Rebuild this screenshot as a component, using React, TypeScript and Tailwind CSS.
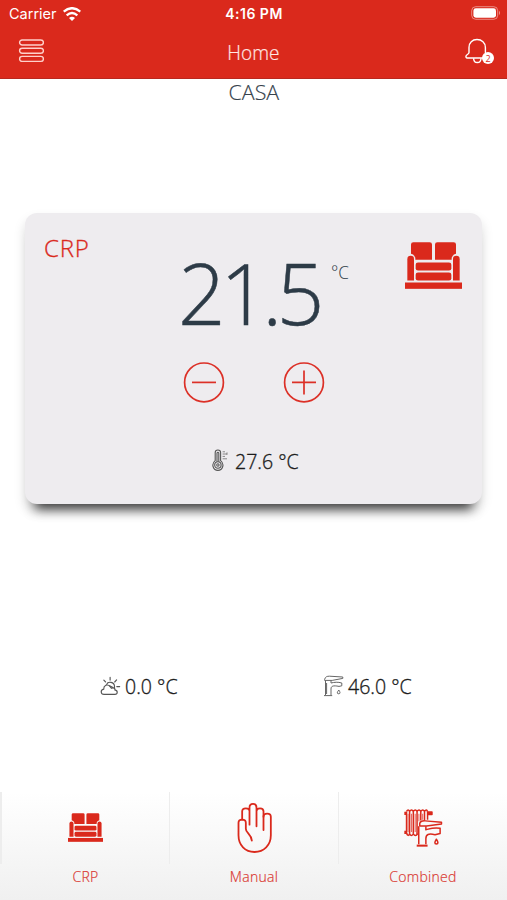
import type { ReactNode } from "react";
import { clsx } from "clsx";

interface IconProps {
  className?: string;
}

function WifiIcon({ className }: IconProps) {
  return (
    <svg viewBox="0 0 54 42" className={className} fill="none" stroke="currentColor" strokeWidth="7">
      <path d="M2 14 Q27 -7 52 14" />
      <path d="M11 25 Q27 11 43 25" />
      <path d="M27 42 L18 33 Q27 25 36 33 Z" fill="currentColor" stroke="none" />
    </svg>
  );
}

function BatteryIcon({ className }: IconProps) {
  return (
    <svg viewBox="0 0 30 14" className={className}>
      <rect x="0.7" y="0.7" width="26" height="12.6" rx="4" fill="none" stroke="#fff" strokeOpacity="0.45" />
      <rect x="2.4" y="2.3" width="22.6" height="9.4" rx="2.4" fill="#fff" />
      <path d="M28 4.8 Q30 7 28 9.2 Z" fill="#fff" fillOpacity="0.5" />
    </svg>
  );
}

function MenuIcon({ className }: IconProps) {
  return (
    <svg viewBox="0 0 26 24" className={className} fill="none" stroke="currentColor" strokeWidth="1.4">
      <rect x="1.6" y="1" width="23.8" height="5" rx="2.5" />
      <rect x="1.6" y="9.2" width="23.8" height="5" rx="2.5" />
      <rect x="1.6" y="17.4" width="23.8" height="5" rx="2.5" />
    </svg>
  );
}

function BellIcon({ className }: IconProps) {
  return (
    <svg viewBox="0 0 26 26" className={className} fill="none" stroke="currentColor" strokeWidth="1.4" strokeLinejoin="round">
      <path d="M4 14.4 V9.4 C4 4.6 7.3 1.5 12 1.5 S20.4 4.6 20.4 9.4 V14.4 M4 14.4 C4 16.3 .9 16.6 .9 18.4 Q.9 20 3 20 H18" strokeLinecap="round" />
      <path d="M8.6 20.2 C8.6 26 16 26 16 20.2" />
    </svg>
  );
}

function SofaIcon({ className }: IconProps) {
  return (
    <svg viewBox="0 0 171 140" className={className} fill="currentColor">
      <path d="M25 0 H74 Q81 0 81 7 V53 H31 V47 Q29 38 18 35 V7 Q18 0 25 0 Z" />
      <path d="M97 0 H146 Q153 0 153 7 V35 Q142 38 140 47 V53 H90 V7 Q90 0 97 0 Z" />
      <path d="M7 115 V51 Q7 41 17 41 Q27 41 27 51 V115 Z" />
      <path d="M144 115 V51 Q144 41 154 41 Q164 41 164 51 V115 Z" />
      <rect x="32" y="61" width="107" height="24" rx="7" />
      <rect x="32" y="91" width="107" height="24" rx="7" />
      <rect x="0" y="121" width="171" height="19" />
    </svg>
  );
}

function HandIcon({ className }: IconProps) {
  return (
    <svg viewBox="0 0 104 150" className={className} fill="none" stroke="currentColor" strokeWidth="5.4" strokeLinecap="round" strokeLinejoin="round">
      <path d="M44 113 C42 92 26 91 26 77 V59 C26 47 4 47 4 59 V97 C4 127 24 147 52 147 S101 127 101 97 V41 C101 29 79 29 79 41 V81" />
      <path d="M79 41 V25 C79 13 58 13 58 25 V70 M58 25 V14 C58 -1 37 -1 37 14 V65 M37 25 C37 13 15 13 15 25 V50" />
    </svg>
  );
}

function ThermometerIcon({ className }: IconProps) {
  return (
    <svg viewBox="0 0 16 22" className={className} fill="none" stroke="currentColor" strokeWidth="1.1">
      <path d="M3.2 11.6 V3.6 C3.2 .2 8.6 .2 8.6 3.6 V11.6 C13 15 10.6 21.4 5.9 21.4 S-1.2 15 3.2 11.6 Z" />
      <path d="M5 12.8 V4 Q5.9 2.5 6.8 4 V12.8" />
      <circle cx="5.9" cy="16" r="3.2" />
      <circle cx="5.9" cy="16" r="1.2" />
      <path d="M10.6 2.8 H13 M10.6 5 H15 M10.6 7.4 H13 M10.6 9.8 H15 M15 3.4 V5.8" strokeWidth="0.9" strokeOpacity="0.75" />
    </svg>
  );
}

function WeatherIcon({ className }: IconProps) {
  return (
    <svg viewBox="0 0 22 20" className={className} fill="none" stroke="currentColor" strokeWidth="1.2" strokeLinecap="round">
      <path d="M4.2 18.8 C.6 18.8 .1 14 3.9 13.3 C3.7 9.6 7.8 7.4 10.4 10.3 L12 12.3 C14.7 11.2 16 13 15.6 14 C19 14.6 18.7 18.8 15.6 18.8 Z" />
      <path d="M7 8.3 C8.2 4.9 15.2 5.4 15.2 10.6 V11.6 M10 9.8 L13.6 11.6" />
      <path d="M10.6 1 V3.8 M4 3.8 L5.8 5.8 M17.4 3.6 L15.4 5.8 M17.6 10.6 H20.6" />
    </svg>
  );
}

function FaucetIcon({ className }: IconProps) {
  return (
    <svg viewBox="0 0 21 22" className={className} fill="none" stroke="currentColor" strokeWidth="1" strokeLinejoin="round">
      <path d="M1.6 4.4 C2.4 1.6 4 1.2 6.5 1.2 L19.8 2 V3.4 L9.2 5.4 H1.6 Z" />
      <path d="M2.5 5.5 V20 M8 20 V14 C8 11 10 10.2 16 11.4 L18.8 10.8 V8 C14.8 6.8 11.5 7.2 8 8 V5.6" />
      <path d="M1 20.6 H9.2 M3.6 8 V19" />
      <path d="M15.8 15 Q12.8 18.8 15.8 18.8 Q18.2 18.6 15.8 15 Z" />
    </svg>
  );
}

// Radiator with a tap in front of it
function CombinedIcon({ className }: IconProps) {
  return (
    <svg viewBox="0 0 114 112" className={className} fill="none" stroke="currentColor" strokeWidth="4.4" strokeLinejoin="round">
      <path d="M7 7 Q12 -1 16 7 Q22 -1 27 7 Q33 -1 38 7 Q44 -1 49 7 Q55 -1 60 7 Q66 -1 69 8" />
      <path d="M7 7 V74 M16 7 V72 M27 7 V72 M38 7 V74 M49 7 V34 M60 7 V34 M69 8 V32" />
      <path d="M11.5 14 V68 M21.5 14 V68 M32.5 14 V68 M43.5 14 V36 M54.5 14 V32" strokeWidth="3" strokeOpacity="0.7" />
      <path d="M7 72 Q12 83 16 73 Q22 83 27 73 Q33 83 40 73" />
      <path d="M3 8 V18 M3 64 V74" strokeWidth="5" />
      <path d="M70 9 H82 V16 H70 Z" fill="currentColor" />
      <path d="M46 42 C49 34 54 35 62 35 L110 39 V44 L66 50 H46 Z" fill="#fafafa" />
      <path d="M43 51 V104 M64 104 V88 C64 75 72 71 91 76 L106 72 V57 C91 53 79 57 64 61 V51" />
      <path d="M37 108 H69" strokeWidth="6" />
      <path d="M95 89 Q86 103 95 103 Q104 103 95 89 Z" />
    </svg>
  );
}

function StatusBar() {
  return (
    <div className="grid h-7 grid-cols-3 items-center pl-[9px] pr-[6px]">
      <div className="flex items-center gap-[6px] font-['Inter',sans-serif] text-[14.5px]">
        Carrier
        <WifiIcon className="mb-px h-[14px] w-[18px]" />
      </div>
      <div className="-ml-[2px] mb-px text-center font-['Inter',sans-serif] text-[14px] font-semibold tracking-[0.5px]">
        4:16 PM
      </div>
      <BatteryIcon className="mb-[2px] h-[14px] w-[30px] justify-self-end" />
    </div>
  );
}

function NavBar() {
  return (
    <div className="grid h-[51px] grid-cols-3 items-start pt-[10px] pr-[13px] pl-[18px]">
      <MenuIcon className="mt-px h-6 w-[26px] text-[#ffd0ca]" />
      <h1 className="-ml-[5px] text-center text-[20px] leading-[30px] font-light text-[#ffe7e4] [-webkit-text-stroke:0.2px]">
        <span className="inline-block scale-x-[0.95]">Home</span>
      </h1>
      <div className="relative h-[26px] w-[29px] justify-self-end">
        <BellIcon className="h-[26px] w-[26px]" />
        <span className="absolute right-0 bottom-0 flex h-3 w-3 items-center justify-center rounded-full bg-white text-[9px] leading-none text-[#da291c]">
          2
        </span>
      </div>
    </div>
  );
}

function RoundButton({ label, plus }: { label: string; plus?: boolean }) {
  return (
    <button aria-label={label} className="h-[42px] w-[42px] text-[#dc3027]">
      <svg viewBox="0 0 42 42" className="h-full w-full" fill="none" stroke="currentColor" strokeWidth="1.7">
        <circle cx="21" cy="21.4" r="19.4" />
        <path d={plus ? "M9 21.4 H33 M21 9.4 V33.4" : "M9 21.4 H33"} />
      </svg>
    </button>
  );
}

function ThermostatCard() {
  return (
    <section className="mx-[25px] mt-[107px] flex h-[291px] flex-col rounded-[12px] bg-[#eeecef] shadow-[0_15px_12px_-10px_rgba(0,0,0,0.75),0_7px_12px_rgba(0,0,0,0.15)]">
      <div className="grid h-[122px] grid-cols-[130px_1fr_130px]">
        <h2 className="pt-[17px] pl-[19px] text-[24px] leading-9 font-light tracking-[0.8px] text-[#da291c] [-webkit-text-stroke:0.3px]">
          CRP
        </h2>
        <div className="flex pt-[34px] pl-[23px] text-[#2d3b47]">
          <span className="w-[153px] origin-left scale-x-[0.98] text-[85px] leading-[90px] font-light tracking-[-5.5px] whitespace-nowrap [-webkit-text-stroke:0.5px]">
            21.5
          </span>
          <span className="origin-left scale-x-[0.9] text-[19px] leading-[50px] font-light whitespace-nowrap">°C</span>
        </div>
        <SofaIcon className="mt-[29px] mr-[20px] h-[47px] w-[57px] justify-self-end text-[#da291c]" />
      </div>
      <div className="mt-[26px] flex justify-center gap-[58px]">
        <RoundButton label="Decrease" />
        <RoundButton label="Increase" plus />
      </div>
      <div className="mt-[43px] flex h-8 items-center pl-[187px] text-[#222]">
        <ThermometerIcon className="mb-1 h-[22px] w-4 text-[#555]" />
        <TempText value="27.6 °C" className="ml-[7px]" />
      </div>
    </section>
  );
}

function TempText({ value, className }: { value: string; className?: string }) {
  return (
    <span
      className={clsx(
        "origin-left scale-x-[0.93] text-[21px] font-light whitespace-nowrap text-[#1c1c1c] [-webkit-text-stroke:0.35px]",
        className
      )}
    >
      {value}
    </span>
  );
}

function Reading({ icon, value }: { icon: ReactNode; value: string }) {
  return (
    <div className="flex h-8 items-center gap-1">
      {icon}
      <TempText value={value} />
    </div>
  );
}

const tabs = [
  { label: "CRP", icon: <SofaIcon className="h-[29px] w-[35px]" /> },
  { label: "Manual", icon: <HandIcon className="h-[50px] w-[35px]" /> },
  { label: "Combined", icon: <CombinedIcon className="h-[38px] w-[39px]" /> },
];

function TabBar() {
  return (
    <nav className="grid h-[108px] grid-cols-3 bg-linear-to-b from-white to-[#f0f0f0] text-[#da291c]">
      {tabs.map((tab, i) => (
        <button key={tab.label} className="flex">
          <span className={clsx("h-[72px] shrink-0 bg-[#ededed]", i === 0 ? "w-[2px]" : "w-px")} />
          <span className="flex flex-1 flex-col items-center">
            <span className="flex h-[71px] items-center">{tab.icon}</span>
            <span className="text-[14px] leading-7 font-light tracking-[0.3px] text-[#da3a33] [-webkit-text-stroke:0.2px]">
              {tab.label}
            </span>
          </span>
        </button>
      ))}
    </nav>
  );
}

export default function App() {
  return (
    <div className="flex h-[900px] w-[507px] flex-col overflow-hidden bg-white font-['Open_Sans','Noto_Sans',sans-serif]">
      <header className="h-[79px] shrink-0 border-b border-[#b9281f] bg-[#da291c] text-white">
        <StatusBar />
        <NavBar />
      </header>
      <main className="flex-1">
        <div className="h-[27px] text-center text-[21px] leading-[27px] font-light text-[#36424c] [-webkit-text-stroke:0.15px]">
          <span className="inline-block scale-x-[1.02]">CASA</span>
        </div>
        <ThermostatCard />
        <div className="mt-[167px] flex pl-[100px]">
          <div className="w-[223px]">
            <Reading icon={<WeatherIcon className="mb-[3px] h-5 w-[21px] text-[#555]" />} value="0.0 °C" />
          </div>
          <Reading icon={<FaucetIcon className="mb-[3px] h-[22px] w-[21px] text-[#666]" />} value="46.0 °C" />
        </div>
      </main>
      <TabBar />
    </div>
  );
}
